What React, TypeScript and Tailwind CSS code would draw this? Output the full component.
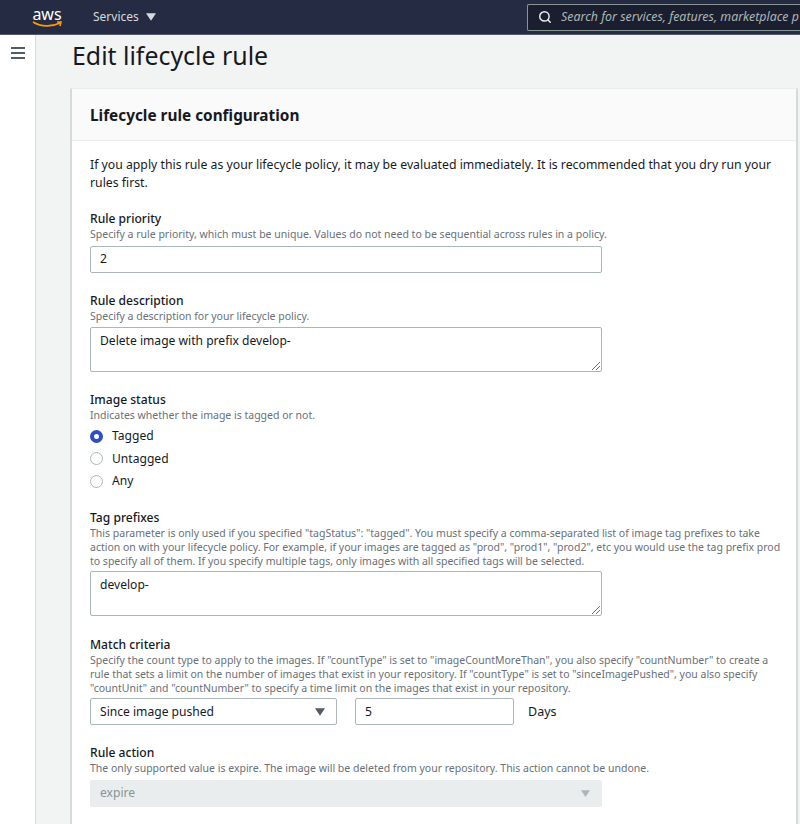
import { Search } from "lucide-react";

const font = { fontFamily: '"Noto Sans", sans-serif' };

function Caret({ className }: { className: string }) {
  return (
    <svg viewBox="0 0 12 9" className={className} fill="currentColor">
      <path d="M0 0h12L6 9z" />
    </svg>
  );
}

function Field({
  label,
  hint,
  className,
  children,
}: {
  label: string;
  hint: string;
  className: string;
  children: React.ReactNode;
}) {
  return (
    <div className={className}>
      <div className="h-[17px] text-[12.1px] leading-[18px] font-medium text-[#16191f]">{label}</div>
      <div className="text-[10.5px] leading-[14px] text-[#687078]">{hint}</div>
      {children}
    </div>
  );
}

function Radio({ label, checked }: { label: string; checked?: boolean }) {
  return (
    <div className="flex h-[22.5px] items-center gap-[9px] text-[12.1px] text-[#16191f]">
      {checked ? (
        <span className="size-[13px] rounded-full border-[4px] border-[#2f4fbd] bg-white" />
      ) : (
        <span className="size-[13px] rounded-full border border-[#aab7b8] bg-white" />
      )}
      {label}
    </div>
  );
}

function TextArea({ value, className }: { value: string; className: string }) {
  return (
    <div
      className={`relative h-[45px] w-[512px] rounded-[2px] border border-[#aab7b8] bg-white pt-[4px] pl-[9px] text-[12.1px] leading-[18px] text-[#16191f] ${className}`}
    >
      {value}
      <svg viewBox="0 0 8 8" className="absolute right-[1px] bottom-[1px] size-2 text-[#687078]" stroke="currentColor">
        <path d="M0 8 8 0M4 8l4-4" />
      </svg>
    </div>
  );
}

export default function App() {
  return (
    <div className="flex h-[824px] w-[800px] flex-col overflow-hidden bg-[#f2f3f3]" style={font}>
      <header className="flex h-[35px] shrink-0 items-center border-b border-[#545b64] bg-[#252b42]">
        <div className="ml-[32px] flex w-[30px] flex-col items-center">
          <span className="text-[16px] leading-[14px] text-white">aws</span>
          <svg viewBox="0 0 30 7" className="h-[7px] w-[30px]" fill="none" stroke="#f90" strokeWidth="1.6">
            <path d="M1 1c8 5 19 5 27 1M25 1h4l-1 4" />
          </svg>
        </div>
        <div className="ml-[31px] text-[12px] text-[#d5dbdb]">Services</div>
        <Caret className="ml-[7px] h-[8px] w-[10px] text-[#d5dbdb]" />
        <div className="ml-auto flex h-[27px] w-[273px] items-center gap-[9px] rounded-l-[2px] border border-r-0 border-[#879596] bg-[#1b1e2f] pl-[10px] whitespace-nowrap">
          <Search size={14} strokeWidth={2.5} className="shrink-0 text-[#eaeded]" />
          <span className="text-[12.4px] text-[#aab7b8] italic">Search for services, features, marketplace p</span>
        </div>
      </header>
      <div className="flex flex-1 overflow-hidden">
        <aside className="flex w-[36px] shrink-0 justify-center border-r border-[#d5dbdb] bg-white pt-[12px]">
          <svg viewBox="0 0 14 12" className="h-[12px] w-[14px]" fill="#545b64">
            <path d="M0 0h14v2H0zM0 5h14v2H0zM0 10h14v2H0z" />
          </svg>
        </aside>
        <main className="flex-1 pr-[2px] pl-[34px]">
          <h1 className="mt-[1px] ml-[2px] text-[24.9px] leading-[38px] text-[#16191f]">Edit lifecycle rule</h1>
          <section className="mt-[14px] border-x-[2px] border-t border-[#d5dbdb] border-t-[#eaeded] bg-white pb-[40px]">
            <div className="flex h-[52px] items-center border-b border-[#eaeded] bg-[#fafafa] pt-[2px] pl-[18px] text-[15.35px] font-bold text-[#16191f]">
              Lifecycle rule configuration
            </div>
            <div className="pt-[15px] pr-[15px] pl-[18px]">
              <p className="text-[12.25px] leading-[18px] text-[#16191f]">
                If you apply this rule as your lifecycle policy, it may be evaluated immediately. It is recommended that you dry run your rules first.
              </p>
              <Field
                className="mt-[18px]"
                label="Rule priority"
                hint="Specify a rule priority, which must be unique. Values do not need to be sequential across rules in a policy."
              >
                <div className="mt-[5px] flex h-[27px] w-[512px] items-center rounded-[2px] border border-[#aab7b8] pl-[9px] text-[12.1px] text-[#16191f]">
                  2
                </div>
              </Field>
              <Field className="mt-[19px]" label="Rule description" hint="Specify a description for your lifecycle policy.">
                <TextArea className="mt-[4px]" value="Delete image with prefix develop-" />
              </Field>
              <Field className="mt-[19px]" label="Image status" hint="Indicates whether the image is tagged or not.">
                <div className="mt-[3px]">
                  <Radio label="Tagged" checked />
                  <Radio label="Untagged" />
                  <Radio label="Any" />
                </div>
              </Field>
              <Field
                className="mt-[16px]"
                label="Tag prefixes"
                hint={'This parameter is only used if you specified "tagStatus": "tagged". You must specify a comma-separated list of image tag prefixes to take action on with your lifecycle policy. For example, if your images are tagged as "prod", "prod1", "prod2", etc you would use the tag prefix prod to specify all of them. If you specify multiple tags, only images with all specified tags will be selected.'}
              >
                <TextArea className="mt-[3px]" value="develop-" />
              </Field>
              <Field
                className="mt-[20px]"
                label="Match criteria"
                hint={'Specify the count type to apply to the images. If "countType" is set to "imageCountMoreThan", you also specify "countNumber" to create a rule that sets a limit on the number of images that exist in your repository. If "countType" is set to "sinceImagePushed", you also specify "countUnit" and "countNumber" to specify a time limit on the images that exist in your repository.'}
              >
                <div className="mt-[3px] flex items-center text-[12.1px] text-[#16191f]">
                  <div className="flex h-[27px] w-[247px] items-center justify-between rounded-[2px] border border-[#aab7b8] pt-[2px] pr-[11px] pl-[9px]">
                    Since image pushed
                    <Caret className="h-[8px] w-[10px] text-[#545b64]" />
                  </div>
                  <div className="ml-[18px] flex h-[27px] w-[159px] items-center rounded-[2px] border border-[#aab7b8] pt-[2px] pl-[9px]">
                    5
                  </div>
                  <span className="ml-[14px] pt-[2px] text-[12.5px]">Days</span>
                </div>
              </Field>
              <Field
                className="mt-[19px]"
                label="Rule action"
                hint="The only supported value is expire. The image will be deleted from your repository. This action cannot be undone."
              >
                <div className="mt-[5px] flex h-[27px] w-[512px] items-center justify-between rounded-[2px] bg-[#eaeded] pt-[1px] pr-[12px] pl-[10px] text-[12.1px] text-[#879596]">
                  expire
                  <Caret className="h-[7px] w-[9px] text-[#aab7b8]" />
                </div>
              </Field>
            </div>
          </section>
        </main>
      </div>
    </div>
  );
}
